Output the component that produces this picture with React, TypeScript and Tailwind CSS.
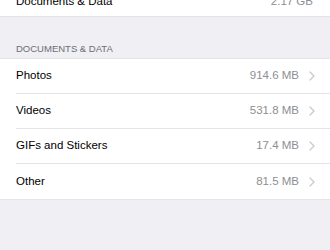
import React from "react";

const rows = [
  { label: "Photos", value: "914.6 MB" },
  { label: "Videos", value: "531.8 MB" },
  { label: "GIFs and Stickers", value: "17.4 MB" },
  { label: "Other", value: "81.5 MB" },
];

function Chevron() {
  return (
    <svg width="6" height="10" viewBox="0 0 6 10" className="ml-[10px] shrink-0">
      <path d="M1 1 L5 5 L1 9" fill="none" stroke="#c7c7cc" strokeWidth="1.2" strokeLinecap="round" strokeLinejoin="round" />
    </svg>
  );
}

export default function App() {
  return (
    <div className="w-[330px] h-[250px] overflow-hidden bg-[#efeff4]" style={{ fontFamily: '"Liberation Sans", Arial, sans-serif' }}>
      <div className="bg-white h-[30px] -mt-[13px] flex items-center pl-4 pr-[17px] border-b border-[#e3e3e8] text-[11.5px]">
        <span className="text-black flex-1">Documents &amp; Data</span>
        <span className="text-[#8e8e93]">2.17 GB</span>
      </div>
      <div className="pl-4 text-[9.5px] text-[#6d6d72] leading-[11px] h-[41px] flex items-end pb-[4px]">
        DOCUMENTS &amp; DATA
      </div>
      <div className="bg-white border-t border-b border-[#e3e3e8]">
        {rows.map((r, i) => (
          <div key={r.label} className="pl-4">
            <div className={"h-[35px] flex items-center pr-[15px] text-[11.5px]" + (i < rows.length - 1 ? " border-b border-[#e3e3e8]" : "")}>
              <span className="flex-1 text-black">{r.label}</span>
              <span className="text-[#8e8e93]">{r.value}</span>
              <Chevron />
            </div>
          </div>
        ))}
      </div>
    </div>
  );
}
